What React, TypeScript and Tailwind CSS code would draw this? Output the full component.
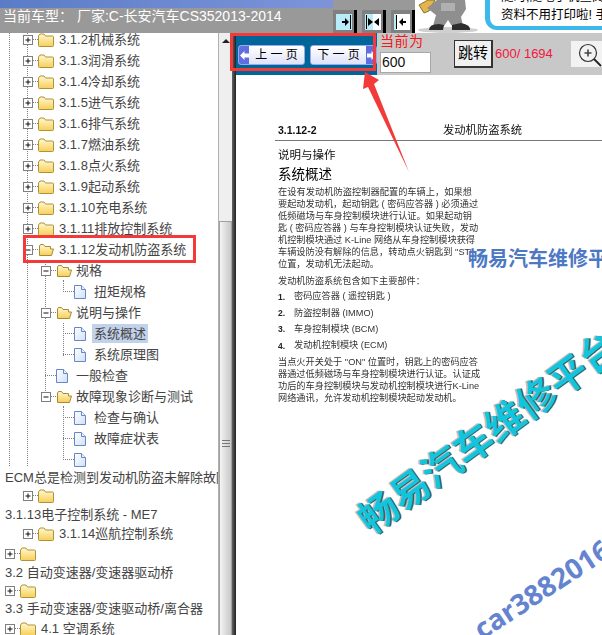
const uiFont = "font-['Liberation_Sans','Noto_Sans_CJK_SC',sans-serif]";

function Expander({ open }: { open?: boolean }) {
  return (
    <svg width="10" height="10" viewBox="0 0 10 10" className="shrink-0">
      <rect x="0.5" y="0.5" width="9" height="9" fill="#fff" stroke="#7f7f7f" />
      <path d={open ? "M2.5 5H7.5" : "M2.5 5H7.5M5 2.5V7.5"} stroke="#111" />
    </svg>
  );
}

function Folder({ open }: { open?: boolean }) {
  return (
    <svg width="16" height="14" viewBox="0 0 16 14" className="shrink-0">
      <defs>
        <linearGradient id="fold" x1="0" y1="0" x2="0" y2="1">
          <stop offset="0" stopColor="#fff8d0" />
          <stop offset="1" stopColor="#f7cf58" />
        </linearGradient>
      </defs>
      {open ? (
        <path d="M1.5 3V12.5H13.5L15.5 6H12.5V3.5H7L5.5 1.5H2.5Z" fill="url(#fold)" stroke="#a88a30" strokeLinejoin="round" />
      ) : (
        <path d="M0.5 3V12.5Q0.5 13.5 1.5 13.5H14.5Q15.5 13.5 15.5 12.5V4Q15.5 3 14.5 3H7.5L6 1H2Z" fill="url(#fold)" stroke="#b09238" strokeLinejoin="round" />
      )}
    </svg>
  );
}

function Doc() {
  return (
    <svg width="12" height="14" viewBox="0 0 12 14" className="shrink-0">
      <defs>
        <linearGradient id="page" x1="0" y1="0" x2="1" y2="1">
          <stop offset="0" stopColor="#ffffff" />
          <stop offset="1" stopColor="#cfe0f8" />
        </linearGradient>
      </defs>
      <path d="M0.5 0.5H7.5L11.5 4.5V13.5H0.5Z" fill="url(#page)" stroke="#6a86c4" />
      <path d="M7.5 0.5V4.5H11.5" fill="#e8f0fc" stroke="#6a86c4" />
    </svg>
  );
}

function Dash({ w }: { w: string }) {
  return <span className={`${w} shrink-0 border-t border-dotted border-[#808080]`} />;
}

// one folder row in the tree
function FolderRow({ indent, text, open, h = "h-[21px]", gap = "ml-[5px]" }: { indent: string; text?: string; open?: boolean; h?: string; gap?: string }) {
  return (
    <div className={`flex items-center ${h} ${indent}`}>
      <Expander open={open} />
      <Dash w="w-[5px]" />
      <Folder open={open} />
      {text && <span className={`${gap} whitespace-nowrap`}>{text}</span>}
    </div>
  );
}

function DocRow({ indent, text, selected, dash }: { indent: string; text?: string; selected?: boolean; dash: string }) {
  return (
    <div className={`flex items-center h-[21px] ${indent}`}>
      <Dash w={dash} />
      <Doc />
      {text && (
        <span className={`ml-[6px] px-[2px] whitespace-nowrap ${selected ? "bg-[#c2d2ea]" : ""}`}>{text}</span>
      )}
    </div>
  );
}

function TextRow({ text, h }: { text: string; h: string }) {
  return <div className={`flex items-center ${h} pl-[5px] whitespace-nowrap`}>{text}</div>;
}

function Guide({ cls }: { cls: string }) {
  return <div className={`absolute border-l border-dotted border-[#808080] ${cls}`} />;
}

function Tree() {
  const level1 = ["3.1.2机械系统", "3.1.3润滑系统", "3.1.4冷却系统", "3.1.5进气系统", "3.1.6排气系统", "3.1.7燃油系统", "3.1.8点火系统", "3.1.9起动系统", "3.1.10充电系统", "3.1.11排放控制系统"];
  return (
    <div className={`relative w-[218px] h-full overflow-hidden bg-white text-[13px] text-[#444] ${uiFont}`}>
      <Guide cls="left-[9px] top-0 h-[433px]" />
      <Guide cls="left-[27px] top-0 h-[433px]" />
      <Guide cls="left-[45px] top-[228px] h-[140px]" />
      <Guide cls="left-[63px] top-[247px] h-[12px]" />
      <Guide cls="left-[63px] top-[290px] h-[33px]" />
      <Guide cls="left-[63px] top-[373px] h-[54px]" />
      <div className="relative mt-[-4px]">
        {level1.map((t) => (
          <FolderRow key={t} indent="pl-[23px]" text={t} />
        ))}
        <FolderRow indent="pl-[23px]" text="3.1.12发动机防盗系统" open />
        <FolderRow indent="pl-[41px]" text="规格" open gap="ml-[4px]" />
        <DocRow indent="pl-[63px]" dash="w-[11px]" text="扭矩规格" />
        <FolderRow indent="pl-[41px]" text="说明与操作" open gap="ml-[4px]" />
        <DocRow indent="pl-[63px]" dash="w-[11px]" text="系统概述" selected />
        <DocRow indent="pl-[63px]" dash="w-[11px]" text="系统原理图" />
        <DocRow indent="pl-[45px]" dash="w-[11px]" text="一般检查" />
        <FolderRow indent="pl-[41px]" text="故障现象诊断与测试" open gap="ml-[4px]" />
        <DocRow indent="pl-[63px]" dash="w-[11px]" text="检查与确认" />
        <DocRow indent="pl-[63px]" dash="w-[11px]" text="故障症状表" />
        <DocRow indent="pl-[63px]" dash="w-[11px]" />
        <TextRow h="h-[15px]" text="ECM总是检测到发动机防盗未解除故障" />
        <FolderRow indent="pl-[23px]" />
        <TextRow h="h-[17px]" text="3.1.13电子控制系统 - ME7" />
        <FolderRow indent="pl-[23px]" text="3.1.14巡航控制系统" />
        <FolderRow indent="pl-[5px]" h="h-[19px]" />
        <TextRow h="h-[19px]" text="3.2 自动变速器/变速器驱动桥" />
        <FolderRow indent="pl-[5px]" h="h-[17px]" />
        <TextRow h="h-[19px]" text="3.3 手动变速器/变速驱动桥/离合器" />
        <FolderRow indent="pl-[5px]" text="4.1 空调系统" />
      </div>
    </div>
  );
}

function Scrollbar() {
  return (
    <div className="w-[14px] h-full overflow-hidden flex flex-col items-center bg-[#efefef] border-l border-[#b0b0b0]">
      <div className="mt-[6px] w-0 h-0 border-x-[4px] border-x-transparent border-b-[4px] border-b-[#222]" />
      <div className="mt-[178px] w-full h-[444px] shrink-0 flex items-center justify-center border border-[#a0a0a0] bg-gradient-to-r from-[#f4f4f4] to-[#c8c8c8]">
        <div className="w-[8px] h-[7px] border-y border-[#777] flex items-center">
          <div className="w-full border-t border-[#777]" />
        </div>
      </div>
    </div>
  );
}

function NavIcon({ kind }: { kind: "right" | "both" | "left" }) {
  return (
    <div className="flex items-center w-[24px] h-[23px] pl-[3px] bg-[#808080] border-r-[3px] border-black">
      <svg width="16" height="16" viewBox="0 0 16 16">
        {kind === "right" && (
          <>
            <rect width="16" height="16" fill="#b8ecf8" />
            <path d="M6 7H9V4L13 8L9 12V9H6ZM14 1H15V15H14Z" fill="#000" />
          </>
        )}
        {kind === "both" && (
          <>
            <rect width="8" height="16" fill="#b8ecf8" />
            <rect x="8" width="8" height="16" fill="#fff" />
            <path d="M1 1H2V15H1ZM3 4L8 8L3 12ZM14 4L9 8L14 12Z" fill="#000" />
          </>
        )}
        {kind === "left" && (
          <>
            <rect width="16" height="16" fill="#fff" />
            <rect width="2" height="16" fill="#b8ecf8" />
            <path d="M2 1H3V15H2ZM12 7H9V4L5 8L9 12V9H12Z" fill="#000" />
          </>
        )}
      </svg>
    </div>
  );
}

function Mascot() {
  return (
    <svg width="65" height="33" viewBox="0 0 65 33" className="shrink-0">
      <rect width="65" height="33" fill="#fff" />
      <ellipse cx="33" cy="30" rx="30" ry="3" fill="#cfcfcf" />
      <path d="M4 5L13 0H20L14 11L9 13Z" fill="#e6b54a" stroke="#8a7130" />
      <path d="M12 8L22 0H50L51 9L46 17L48 26H37L33 20L29 26H18L21 15Z" fill="#8f8f8f" />
      <rect x="26" y="3" width="14" height="8" fill="#b0b0b0" />
      <path d="M14 30Q14 24 24 24L29 25L28 30ZM37 25L46 23Q56 25 55 30H37Z" fill="#2e2e2e" />
    </svg>
  );
}

function Header() {
  return (
    <div className={`flex h-[33px] shrink-0 ${uiFont}`}>
      <div className="relative w-[415px] shrink-0 flex bg-[#999999]">
        <div className="flex-1 flex flex-col">
          <div className="h-[8px] bg-gradient-to-r from-[#5a7cc6] to-[#7d94da]" />
          <span className="pl-[3px] text-[14px] leading-[16px] text-white whitespace-nowrap">当前车型： 厂家:C-长安汽车CS352013-2014</span>
        </div>
        <div className="flex self-end gap-[5px]">
          <NavIcon kind="right" />
          <NavIcon kind="both" />
          <NavIcon kind="left" />
        </div>
      </div>
      <Mascot />
      <div className="flex-1 bg-white overflow-hidden pl-[5px]">
        <div className="h-[30px] w-[200px] rounded-bl-[12px] border-l-[5px] border-b-[4px] border-[#3cb8ea] pl-[11px] text-[12.5px] leading-[16px] text-black whitespace-nowrap">
          <div className="h-[5px] overflow-hidden flex items-end">随时,随地手机查阅</div>
          <div className="mt-[2px]">资料不用打印啦! 手</div>
        </div>
      </div>
    </div>
  );
}

function PageButton({ label, dir }: { label: string; dir: "left" | "right" }) {
  const arrow = (
    <div className="flex items-center justify-center w-[10px] h-full bg-[#5f6fe0]">
      <svg width="9" height="9" viewBox="0 0 9 9">
        <path d={dir === "left" ? "M0 4.5L4.5 0V2.5H9V6.5H4.5V9Z" : "M9 4.5L4.5 0V2.5H0V6.5H4.5V9Z"} fill="#fff" />
      </svg>
    </div>
  );
  return (
    <div className="flex items-center justify-between w-[67px] h-[20px] overflow-hidden rounded-[3px] border border-[#9aa8ec] bg-gradient-to-b from-[#ffffff] to-[#dfe2fa] text-[12px] text-black">
      {dir === "left" && arrow}
      <span className="flex-1 text-center whitespace-pre">{label}</span>
      {dir === "right" && arrow}
    </div>
  );
}

function Toolbar() {
  return (
    <div className={`flex h-[42px] shrink-0 ${uiFont}`}>
      <div className="flex items-start gap-[5px] w-[142px] pl-[2px] pt-[12px] bg-[#006699]">
        <PageButton label="上 一 页" dir="left" />
        <PageButton label="下 一 页" dir="right" />
      </div>
      <div className="flex flex-1 items-start bg-[#c8c8c8]">
        <div className="flex flex-col w-[77px] pl-[3px]">
          <span className="text-[14px] leading-[16px] text-[#f01818] tracking-[0.5px]">当前为</span>
          <div className="mt-[3px] w-[51px] h-[21px] flex items-center bg-white border border-[#a8a8a8] pl-[1px] text-[14px] text-[#111]">600</div>
        </div>
        <div className="flex items-center justify-center mt-[7px] w-[39px] h-[28px] bg-[#f0f0f0] border border-[#333] border-r-2 border-b-2 text-[15px] text-black">跳转</div>
        <span className="mt-[13px] ml-[2px] w-[76px] shrink-0 text-[13px] leading-[16px] text-[#f5143c] whitespace-nowrap">600/ 1694</span>
        <div className="flex items-center mt-[8px] h-[26px] flex-1 bg-[#f2f2f2] pl-[4px]">
          <svg width="28" height="26" viewBox="0 0 28 26" className="shrink-0">
            <circle cx="13" cy="12" r="8.5" fill="none" stroke="#333" strokeWidth="1.2" />
            <path d="M9.5 12H16.5M13 8.5V15.5" stroke="#444" strokeWidth="1.6" />
            <path d="M19 18L26 25" stroke="#222" strokeWidth="1.8" />
          </svg>
        </div>
      </div>
    </div>
  );
}

function Line({ text, last }: { text: string; last?: boolean }) {
  return <div className={`h-[12px] leading-[12px] whitespace-nowrap ${last ? "" : "[text-align-last:justify]"}`}>{text}</div>;
}

function ListItem({ n, text }: { n: string; text: string }) {
  return (
    <div className="flex h-[16.3px] items-center">
      <span className="w-[16px] font-bold text-[8.5px] text-[#222]">{n}</span>
      <span>{text}</span>
    </div>
  );
}

function PageContent() {
  return (
    <div className={`relative flex-1 min-h-0 overflow-hidden bg-white pt-[48px] pl-[39px] text-[#333] blur-[0.3px] ${uiFont}`}>
      <div className="flex items-center h-[15px] pl-[3px] text-[#111]">
        <span className="font-bold w-[165px] shrink-0 text-[10.5px]">3.1.12-2</span>
        <span className="text-[11.3px] whitespace-nowrap">发动机防盗系统</span>
      </div>
      <div className="mt-[2px] border-t border-[#777]" />
      <div className="pl-[3px] w-[200px]">
        <div className="mt-[6px] h-[16px] text-[11.5px] leading-[16px] text-[#111]">说明与操作</div>
        <div className="mt-[3px] h-[18px] text-[13.5px] leading-[18px] text-[#000]">系统概述</div>
        <div className="mt-[2px] text-[9.2px] w-[194px]">
          <Line text="在设有发动机防盗控制器配置的车辆上，如果想" />
          <Line text="要起动发动机，起动钥匙 ( 密码应答器 ) 必须通过" />
          <Line text="低频磁场与车身控制模块进行认证。如果起动钥" />
          <Line text="匙 ( 密码应答器 ) 与车身控制模块认证失败，发动" />
          <Line text="机控制模块通过 K-Line 网络从车身控制模块获得" />
          <Line text={'车辆设防没有解除的信息，转动点火钥匙到 "ST"'} />
          <Line text="位置，发动机无法起动。" last />
          <div className="mt-[5px]"><Line text="发动机防盗系统包含如下主要部件：" last /></div>
          <div className="mt-[2px]">
            <ListItem n="1." text="密码应答器 ( 遥控钥匙 )" />
            <ListItem n="2." text="防盗控制器 (IMMO)" />
            <ListItem n="3." text="车身控制模块 (BCM)" />
            <ListItem n="4." text="发动机控制模块 (ECM)" />
          </div>
          <div className="mt-[2px]">
            <Line text={'当点火开关处于 "ON" 位置时，钥匙上的密码应答'} />
            <Line text="器通过低频磁场与车身控制模块进行认证。认证成" />
            <Line text="功后的车身控制模块与发动机控制模块进行K-Line" />
            <Line text="网络通讯，允许发动机控制模块起动发动机。" last />
          </div>
        </div>
      </div>
    </div>
  );
}

// watermarks, red marks and arrow lie over the screen
function Overlays() {
  return (
    <>
      <div className="absolute left-[230px] top-[33px] w-[146px] h-[38px] border-[3px] border-[#f23a3a]" />
      <div className="absolute left-[23px] top-[235px] w-[173px] h-[28px] border-[3px] border-[#f23a3a]" />
      <svg className="absolute left-[355px] top-[65px]" width="60" height="112" viewBox="0 0 60 112">
        <path d="M10 7L24 15L19 19L54 107L13 22L8 24Z" fill="#f23a3a" />
      </svg>
      <div className="absolute left-[468px] top-[245px] text-[20px] leading-[26px] font-bold text-[#4d78c4] whitespace-nowrap font-['Noto_Sans_CJK_SC',sans-serif]">
        畅易汽车维修平台
      </div>
      <div className="absolute left-[361px] top-[500px] origin-[0_50%] rotate-[-36deg] text-[39px] leading-[44px] font-bold text-[#12c4dc] whitespace-nowrap [text-shadow:1px_1px_0_#555,-1px_-1px_0_#bbb] font-['Noto_Sans_CJK_SC',sans-serif]">
        畅易汽车维修平台
      </div>
      <div className="absolute left-[476px] top-[613px] origin-[0_50%] rotate-[-33deg] text-[28px] leading-[36px] font-bold text-[#6484d0] whitespace-nowrap font-['Noto_Sans',sans-serif]">
        car38820168
      </div>
    </>
  );
}

export default function App() {
  return (
    <div className="relative flex flex-col w-[602px] h-[635px] overflow-hidden bg-white">
      <Header />
      <div className="flex flex-1 min-h-0">
        <Tree />
        <Scrollbar />
        <div className="w-[4px] shrink-0 bg-gradient-to-r from-[#666] to-[#222]" />
        <div className="flex flex-col flex-1 min-w-0">
          <Toolbar />
          <PageContent />
        </div>
      </div>
      <Overlays />
    </div>
  );
}
